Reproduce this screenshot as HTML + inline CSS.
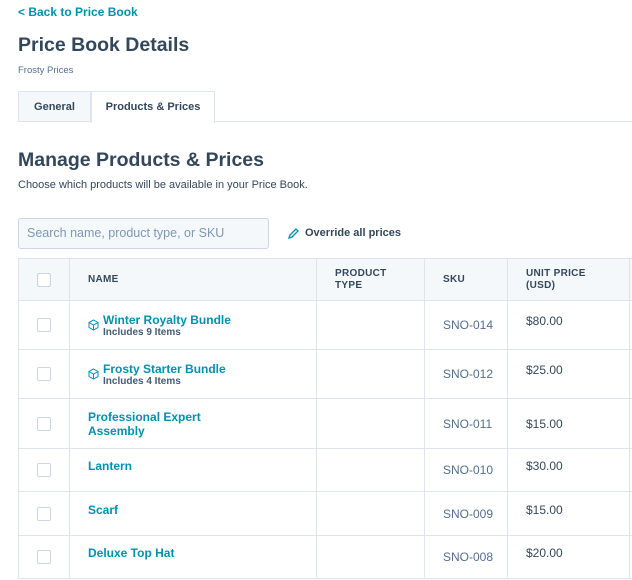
<!DOCTYPE html>
<html><head><style>
*{margin:0;padding:0;box-sizing:border-box}
body{width:632px;height:580px;overflow:hidden;background:#fff;font-family:"Liberation Sans",sans-serif;color:#33475b;position:relative}
.a{position:absolute;white-space:nowrap}
.link{color:#0091ae;font-weight:bold}
table{position:absolute;left:18px;top:258px;border-collapse:collapse;table-layout:fixed;width:640px}
td,th{border:1px solid #dfe3eb;font-size:12px;text-align:left;padding:0 0 0 18px;vertical-align:middle}
th{background:#f5f8fa;font-size:10px;font-weight:bold;letter-spacing:.3px;color:#33475b;height:42px;line-height:12px}
.cb{width:14px;height:14px;border:1px solid #cbd6e2;border-radius:2px;background:#fff;margin-left:0}
.n{font-size:12px;color:#0091ae;font-weight:bold;line-height:14px}
.s{font-size:10px;font-weight:bold;color:#425b76}
.sku{font-size:12px;color:#516f90}
.pr{font-size:12px;color:#33475b}
</style></head><body>
<div class="a link" style="left:18px;top:5px;font-size:12px">&lt; Back to Price Book</div>
<div class="a" style="left:18px;top:34px;font-size:19.5px;font-weight:bold">Price Book Details</div>
<div class="a" style="left:18px;top:65px;font-size:9.5px;color:#516f90">Frosty Prices</div>
<div class="a" style="left:18px;top:91px;width:73px;height:31px;background:#f5f8fa;border:1px solid #dfe3eb;font-size:11px;font-weight:bold;text-align:center;line-height:30px">General</div>
<div class="a" style="left:91px;top:91px;width:124px;height:32px;background:#fff;border:1px solid #dfe3eb;border-bottom:none;font-size:11px;font-weight:bold;text-align:center;line-height:30px">Products &amp; Prices</div>
<div class="a" style="left:215px;top:121px;width:417px;height:1px;background:#dfe3eb"></div>
<div class="a" style="left:18px;top:149px;font-size:19.5px;font-weight:bold">Manage Products &amp; Prices</div>
<div class="a" style="left:18px;top:179px;font-size:11px">Choose which products will be available in your Price Book.</div>
<div class="a" style="left:18px;top:218px;width:251px;height:31px;background:#f5f8fa;border:1px solid #cbd6e2;border-radius:3px;font-size:12.5px;color:#7c98b6;padding-left:8px;line-height:29px">Search name, product type, or SKU</div>
<svg class="a" style="left:288px;top:228px" width="11" height="11" viewBox="0 0 11 11"><path d="M1 10 L2 7 L8 1 L10 3 L4 9 Z" fill="none" stroke="#0091ae" stroke-width="1.3"/></svg>
<div class="a" style="left:305px;top:227px;font-size:11px;font-weight:bold">Override all prices</div>
<table>
<colgroup><col style="width:51px"><col style="width:247px"><col style="width:108px"><col style="width:83px"><col style="width:122px"><col style="width:29px"></colgroup>
<tr><th><div class="cb"></div></th><th>NAME</th><th>PRODUCT<br>TYPE</th><th>SKU</th><th>UNIT PRICE<br>(USD)</th><th></th></tr>
<tr style="height:49px"><td><div class="cb"></div></td><td><svg style="float:left;margin:6px 4px 0 0" width="11" height="12" viewBox="0 0 11 12"><path d="M5.5 1 L10 3.5 V8.5 L5.5 11 L1 8.5 V3.5 Z M1 3.5 L5.5 6 L10 3.5 M5.5 6 V11" fill="none" stroke="#0091ae" stroke-width="1"/></svg><div class="n">Winter Royalty Bundle</div><div class="s">Includes 9 Items</div></td><td></td><td class="sku">SNO-014</td><td class="pr" style="padding-bottom:8px">$80.00</td><td></td></tr>
<tr style="height:49px"><td><div class="cb"></div></td><td><svg style="float:left;margin:6px 4px 0 0" width="11" height="12" viewBox="0 0 11 12"><path d="M5.5 1 L10 3.5 V8.5 L5.5 11 L1 8.5 V3.5 Z M1 3.5 L5.5 6 L10 3.5 M5.5 6 V11" fill="none" stroke="#0091ae" stroke-width="1"/></svg><div class="n">Frosty Starter Bundle</div><div class="s">Includes 4 Items</div></td><td></td><td class="sku">SNO-012</td><td class="pr" style="padding-bottom:8px">$25.00</td><td></td></tr>
<tr style="height:50px"><td><div class="cb"></div></td><td><div class="n">Professional Expert<br>Assembly</div></td><td></td><td class="sku">SNO-011</td><td class="pr">$15.00</td><td></td></tr>
<tr style="height:43px"><td><div class="cb"></div></td><td><div class="n" style="padding-bottom:8px">Lantern</div></td><td></td><td class="sku">SNO-010</td><td class="pr" style="padding-bottom:8px">$30.00</td><td></td></tr>
<tr style="height:44px"><td><div class="cb"></div></td><td><div class="n" style="padding-bottom:8px">Scarf</div></td><td></td><td class="sku">SNO-009</td><td class="pr" style="padding-bottom:8px">$15.00</td><td></td></tr>
<tr style="height:43px"><td><div class="cb"></div></td><td><div class="n" style="padding-bottom:8px">Deluxe Top Hat</div></td><td></td><td class="sku">SNO-008</td><td class="pr" style="padding-bottom:8px">$20.00</td><td></td></tr>
</table>
</body></html>
